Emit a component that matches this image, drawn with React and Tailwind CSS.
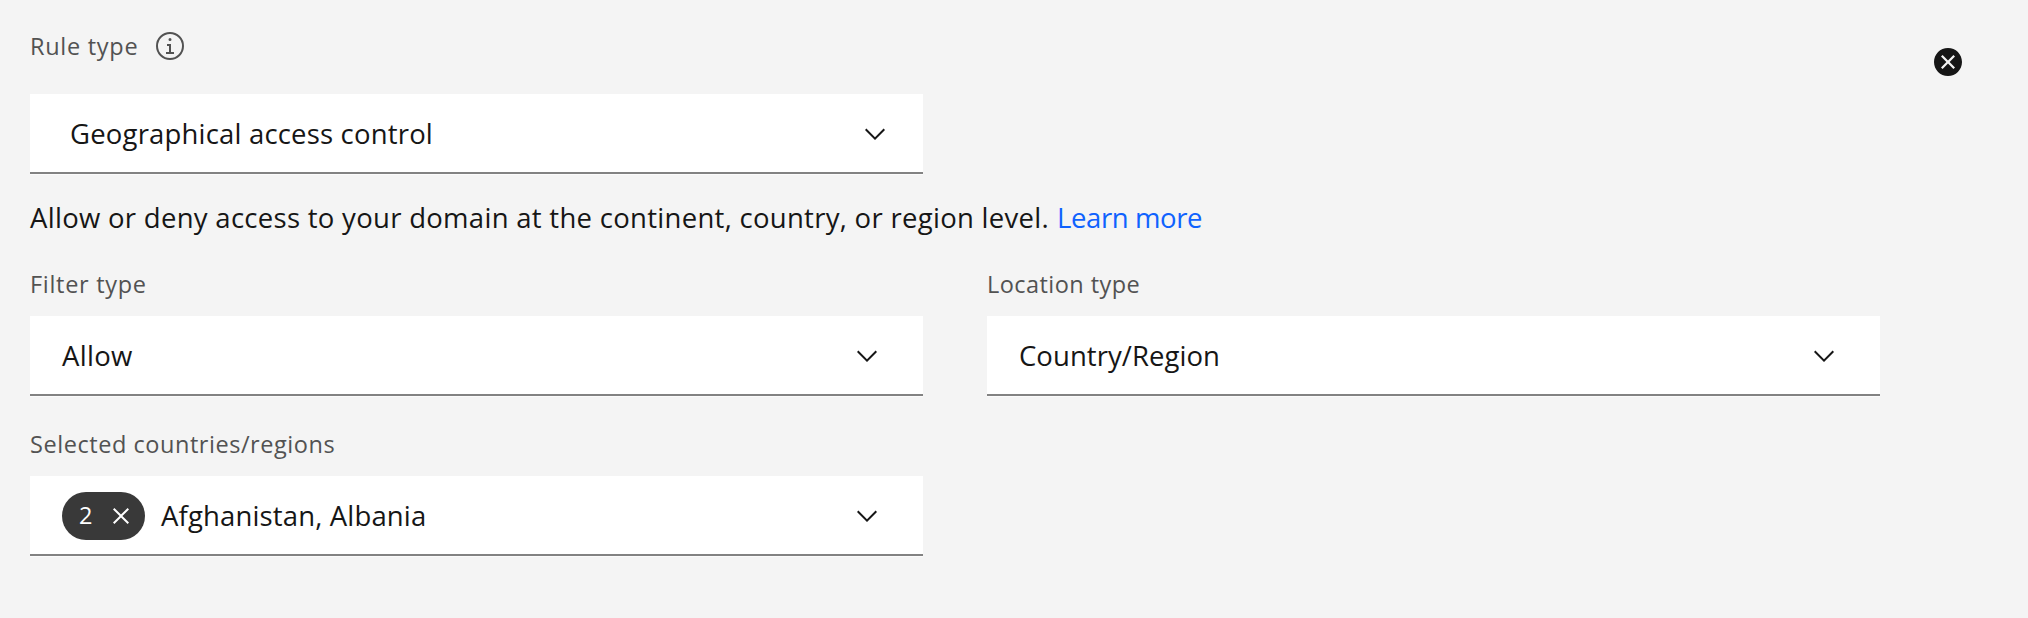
function ChevronDown() {
  return (
    <svg viewBox="0 0 16 16" className="size-8 shrink-0" fill="#161616">
      <path d="M8 11L3 6l.7-.7L8 9.6l4.3-4.3.7.7z" />
    </svg>
  );
}

function Information() {
  return (
    <svg viewBox="0 0 32 32" className="size-8 shrink-0" fill="#525252">
      <path d="M17 22v-8h-4v2h2v6h-3v2h8v-2zM16 8a1.5 1.5 0 1 0 1.5 1.5A1.5 1.5 0 0 0 16 8z" />
      <path d="M16 30a14 14 0 1 1 14-14 14 14 0 0 1-14 14zm0-26a12 12 0 1 0 12 12A12 12 0 0 0 16 4z" />
    </svg>
  );
}

function CloseFilled() {
  return (
    <svg viewBox="0 0 32 32" className="size-8 shrink-0" fill="#161616">
      <path d="M16 2C8.2 2 2 8.2 2 16s6.2 14 14 14 14-6.2 14-14S23.8 2 16 2zm5.4 21L16 17.6 10.6 23 9 21.4l5.4-5.4L9 10.6 10.6 9l5.4 5.4L21.4 9l1.6 1.6-5.4 5.4 5.4 5.4z" />
    </svg>
  );
}

function Close() {
  return (
    <svg viewBox="0 0 32 32" className="size-8 shrink-0" fill="#ffffff">
      <path d="M24 9.4L22.6 8 16 14.6 9.4 8 8 9.4l6.6 6.6L8 22.6 9.4 24l6.6-6.6 6.6 6.6 1.4-1.4-6.6-6.6z" />
    </svg>
  );
}

function Label({ className, children }) {
  return (
    <div className={`h-8 whitespace-nowrap text-[23.5px] leading-8 text-[#525252] ${className}`}>
      {children}
    </div>
  );
}

function Field({ className, children }) {
  return (
    <button
      type="button"
      className={`flex h-20 w-[893px] items-center justify-between whitespace-nowrap border-b-2 border-[#828282] bg-white pt-0.5 text-left text-[27.5px] shadow-[0_1px_0_#fbfbfb] ${className}`}
    >
      {children}
      <ChevronDown />
    </button>
  );
}

export default function App() {
  return (
    <div className="flex h-[618px] w-[2028px] items-start justify-between bg-[#f4f4f4] pl-[30px] pr-16 pt-[30px] font-['Open_Sans',sans-serif] text-[#161616]">
      <main>
        <div className="flex items-center">
          <Label className="w-[124px] tracking-[0.72px]">Rule type</Label>
          <Information />
        </div>
        <Field className="mt-8 pl-10 pr-8">
          <span className="tracking-[0.18px]">Geographical access control</span>
        </Field>
        <p className="mt-6 flex h-10 whitespace-nowrap text-[27.5px] leading-10">
          <span className="w-[1027px] tracking-[0.29px]">
            Allow or deny access to your domain at the continent, country, or region level.
          </span>
          <a className="tracking-[-0.4px] text-[#0f62fe]">Learn more</a>
        </p>
        <div className="mt-[30px] flex gap-16">
          <div>
            <Label className="tracking-[0.7px]">Filter type</Label>
            <Field className="mt-4 pl-8 pr-10">
              <span className="tracking-[0.3px]">Allow</span>
            </Field>
          </div>
          <div>
            <Label className="tracking-[0.45px]">Location type</Label>
            <Field className="mt-4 pl-8 pr-10">
              <span className="tracking-[0.05px]">Country/Region</span>
            </Field>
          </div>
        </div>
        <Label className="mt-8 tracking-[0.55px]">Selected countries/regions</Label>
        <Field className="mt-4 pl-8 pr-10">
          <span className="flex items-center">
            <span className="mr-4 flex h-12 w-[83px] items-center justify-between rounded-full bg-[#393939] pl-[17px] pr-2 text-[23.5px] text-white">
              2
              <Close />
            </span>
            <span className="tracking-[0.15px]">Afghanistan, Albania</span>
          </span>
        </Field>
      </main>
      <button type="button" className="mt-4" aria-label="Remove rule">
        <CloseFilled />
      </button>
    </div>
  );
}
